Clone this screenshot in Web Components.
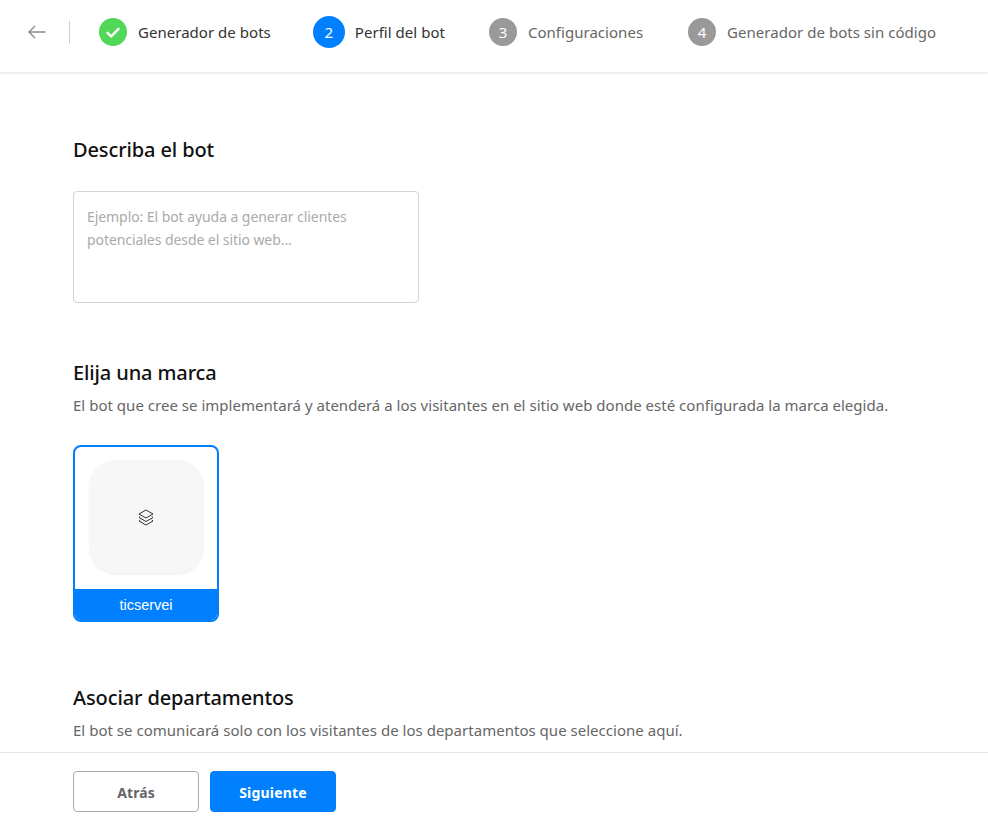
<!DOCTYPE html>
<html lang="es"><head><meta charset="utf-8"><title>Perfil del bot</title>
<style>
html,body{margin:0;height:100%;background:#fff}
body{font-family:"Noto Sans","Open Sans","Liberation Sans",sans-serif;overflow:hidden}
</style></head><body>
<bot-app>
  <bot-header slot="header">
    <bot-step state="done" label="Generador de bots"></bot-step>
    <bot-step state="active" n="2" label="Perfil del bot"></bot-step>
    <bot-step n="3" label="Configuraciones"></bot-step>
    <bot-step n="4" label="Generador de bots sin código"></bot-step>
  </bot-header>
  <bot-section title="Describa el bot" gap="26"><bot-textarea placeholder="Ejemplo: El bot ayuda a generar clientes potenciales desde el sitio web..."></bot-textarea></bot-section>
  <bot-section title="Elija una marca" desc="El bot que cree se implementará y atenderá a los visitantes en el sitio web donde esté configurada la marca elegida." gap="30"><brand-card name="ticservei"></brand-card></bot-section>
  <bot-section class="last" title="Asociar departamentos" desc="El bot se comunicará solo con los visitantes de los departamentos que seleccione aquí."></bot-section>
  <bot-footer slot="footer"><bot-button>Atrás</bot-button><bot-button primary>Siguiente</bot-button></bot-footer>
</bot-app>
<script>
function def(name,html,init){customElements.define(name,class extends HTMLElement{
  constructor(){super();this.attachShadow({mode:'open'}).innerHTML=html;}
  connectedCallback(){init&&init.call(this,this.shadowRoot);}
});}
def('bot-app',`<style>
:host{display:flex;flex-direction:column;height:822px;width:988px;overflow:hidden}
main{flex:1;min-height:0;overflow:hidden;padding:63px 73px 0;display:flex;flex-direction:column;gap:55px}
</style><slot name="header"></slot><main><slot></slot></main><slot name="footer"></slot>`);
def('bot-header',`<style>
:host{display:flex;align-items:center;height:72px;flex:none;box-shadow:0 1px 3px rgba(0,0,0,.12);padding:0 0 8px 28px;position:relative;box-sizing:border-box}
svg{width:18px;height:14px;display:block;flex:none}
.d{width:1px;height:23px;background:#d0d0d0;margin:0 29px 0 23px;flex:none}
.s{display:flex;align-items:center}
</style><svg viewBox="0 0 18 14" fill="none" stroke="#8a8a8a" stroke-width="1.4"><path d="M17.5 7H1M7 1 1 7l6 6"/></svg><div class="d"></div><div class="s"><slot></slot></div>`);
def('bot-step',`<style>
:host{display:flex;align-items:center;flex:none;font-size:15px;color:#666;margin-right:45px}
:host([state=active]),:host([state=done]){color:#333}
:host([state=done]){margin-right:42px}
:host([state=active]){margin-right:44px}
.c{width:28px;height:28px;border-radius:50%;background:#999;color:#fff;display:flex;align-items:center;justify-content:center;font-size:15px;margin-right:11px;flex:none}
:host([state=done]) .c{background:#52d858}
:host([state=active]) .c{background:#0080ff;width:32px;height:32px;margin-right:10px}
svg{width:14px;height:11px;display:none}
:host([state=done]) svg{display:block}
.l{letter-spacing:.03px}
</style><div class="c"><svg viewBox="0 0 14 11" fill="none" stroke="#fff" stroke-width="2.4" stroke-linecap="round" stroke-linejoin="round"><path d="M1.500 5.800 5.200 9.300 12.500 1.800"/></svg><span class="n"></span></div><span class="l"></span>`,
function(r){r.querySelector('.n').textContent=this.getAttribute('n')||'';r.querySelector('.l').textContent=this.getAttribute('label');});
def('bot-section',`<style>
:host{display:block;flex:none}
:host(.last){margin-top:6px}
h2{margin:0;font-size:20px;line-height:30px;font-weight:500;color:#111;letter-spacing:-.12px}
p{margin:7px 0 0;font-size:15px;line-height:20px;color:#666;white-space:nowrap;letter-spacing:.02px}
</style><h2></h2><p></p><div class="b"><slot></slot></div>`,
function(r){r.querySelector('h2').textContent=this.getAttribute('title');const p=r.querySelector('p');const d=this.getAttribute('desc');if(d)p.textContent=d;else p.remove();
 r.querySelector('.b').style.marginTop=(this.getAttribute('gap')||0)+'px';});
def('bot-textarea',`<style>
:host{display:block;width:346px;height:112px;box-sizing:border-box;border:1px solid #d4d4d4;border-radius:4px;padding:13px 13px;font-size:14px;line-height:23px;color:#aaa;letter-spacing:-.07px}
</style><span></span>`,function(r){r.querySelector('span').textContent=this.getAttribute('placeholder');});
def('brand-card',`<style>
:host{display:flex;flex-direction:column;width:146px;height:177px;box-sizing:border-box;border:2px solid #0080ff;border-radius:8px;overflow:hidden}
.t{flex:1;display:flex;align-items:center;justify-content:center;padding-bottom:3px}
.i{width:113px;height:113px;border-radius:26px;background:#f7f7f7;box-shadow:0 1px 3px rgba(0,0,0,.09);display:flex;align-items:center;justify-content:center}
.n{height:31px;background:#0080ff;color:#fff;font:14.500px/33px "Liberation Sans","Noto Sans",sans-serif;text-align:center}
svg{width:16px;height:18px;display:block}
</style><div class="t"><div class="i"><svg viewBox="0 0 16 18" fill="none" stroke="#333" stroke-width="1" stroke-linejoin="round"><path d="M8 2 15 6 8 10 1 6Z"/><path d="M2.200 8.600 1 9.500 8 13.500 15 9.500 13.800 8.600"/><path d="M2.200 12.100 1 13 8 17 15 13 13.800 12.100"/></svg></div></div><div class="n"></div>`,
function(r){r.querySelector('.n').textContent=this.getAttribute('name');});
def('bot-footer',`<style>
:host{display:flex;gap:11px;flex:none;height:70px;box-sizing:border-box;border-top:1px solid #e6e6e6;padding:18px 0 0 73px;background:#fff}
</style><slot></slot>`);
def('bot-button',`<style>
:host{display:flex;align-items:center;justify-content:center;width:126px;height:41px;box-sizing:border-box;border:1px solid #aaa;border-radius:4px;color:#666;font-size:14px;font-weight:700;background:#fff;padding-top:1px;letter-spacing:.1px}
:host([primary]){background:#0080ff;border-color:#0080ff;color:#fff;letter-spacing:.2px}
</style><slot></slot>`);
</script>
</body></html>
